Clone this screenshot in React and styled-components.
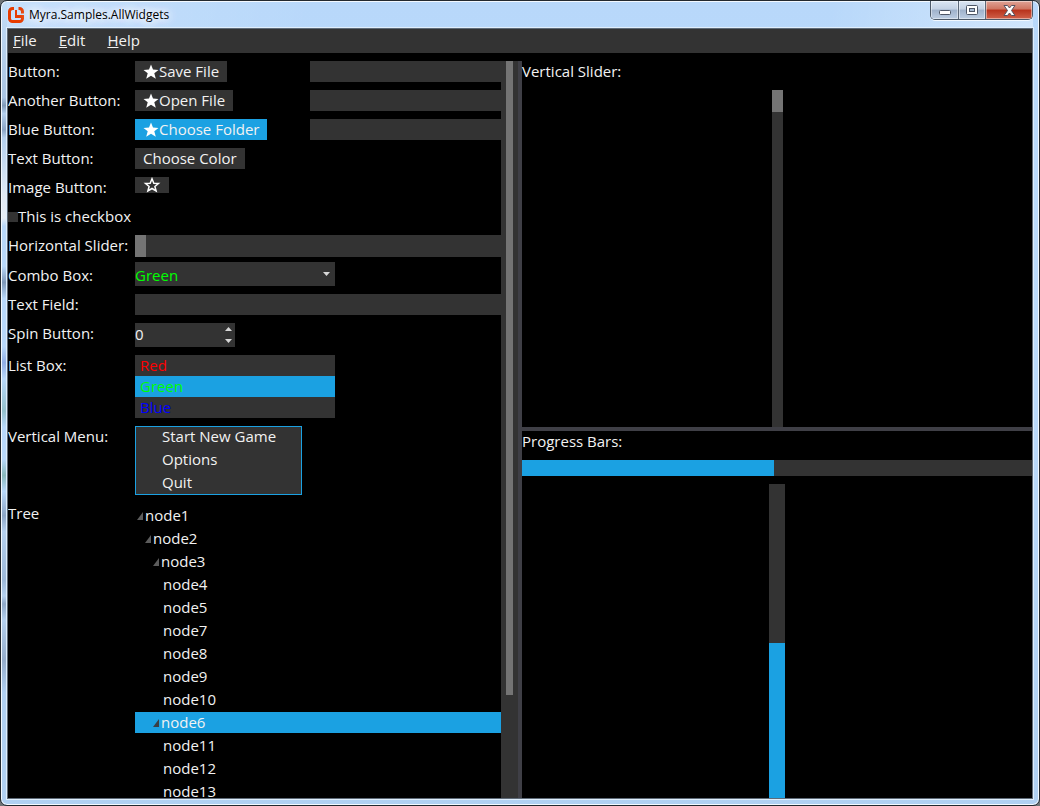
import React, { useState } from "react";
import styled, { createGlobalStyle, css } from "styled-components";

const c = {
  panel: "#333333",
  accent: "#1ba1e2",
  splitter: "#3f3f46",
  thumb: "#747474",
  text: "#f2f2f2",
};

const Global = createGlobalStyle`
  *, *::before, *::after { box-sizing: border-box; }
  body { margin: 0; background: #6f7376; }
  button, input, select { font: inherit; color: inherit; border: 0; border-radius: 0; padding: 0; margin: 0; }
  ul { list-style: none; margin: 0; padding: 0; }
`;

const glassEdge = `linear-gradient(180deg,
  #c4def8 0, #a9c4e2 12%, #7f9ab8 13%, #b4d0ee 14%, #8aa4c4 16%, #b4d0ee 17%,
  #dfeaf5 24%, #e6eef6 27%, #b8d8fa 28%, #b8d8fa 33%, #7e98b8 35%, #b8d8fa 37%,
  #b8d8fa 43%, #90aee6 45%, #b8d8fa 47%, #94c0cc 51%, #b8d8fa 53%,
  #b8d8fa 57%, #88b8bc 59%, #b8d8fa 61%, #8ca6c6 64%, #b4d0ee 66%,
  #9cb8d8 72%, #b4d0ee 74%, #8ea8c8 75%, #b4d0ee 77%, #94acca 82%, #b0d0f2 86%)`;

const Window = styled.div`
  display: flex;
  flex-direction: column;
  height: 100vh;
  overflow: hidden;
  padding: 0 6px 6px 6px;
  border: 1px solid #23292f;
  border-radius: 7px;
  box-shadow: inset 0 0 0 1px #f3f9ff;
  background:
    ${glassEdge} left / 6px 100% no-repeat,
    linear-gradient(180deg, #b8d8fa 0, #bcdbfc 40%, #b0d0f2 100%);
`;

const TitleBar = styled.header`
  display: flex;
  align-items: flex-start;
  flex: none;
  height: 27px;
  background: linear-gradient(100deg, rgba(255, 255, 255, 0.2) 0, transparent 30%, transparent 80%, rgba(255, 255, 255, 0.35) 100%);
`;

const Brand = styled.div`
  display: flex;
  align-items: center;
  gap: 5px;
  flex: 1;
  height: 27px;
  padding-left: 1px;
`;

const Title = styled.h1`
  margin: 0;
  font: 12px/16px "Open Sans", sans-serif;
  color: #000;
  text-shadow: 0 0 8px #fff, 0 0 8px #fff, 0 0 12px #fff, 0 0 16px #fff;
`;

const Controls = styled.div`
  display: flex;
  height: 19px;
  border: 1px solid #4c5968;
  border-top: 0;
  border-radius: 0 0 5px 5px;
  overflow: hidden;
  box-shadow: 0 1px 0 #f3f9ff;
`;

const ControlButton = styled.button`
  display: flex;
  align-items: center;
  justify-content: center;
  width: ${(p) => (p.$close ? 47 : 27)}px;
  border-left: ${(p) => (p.$first ? 0 : 1)}px solid #5c6878;
  box-shadow: inset 0 0 0 1px rgba(255, 255, 255, 0.45);
  background: ${(p) =>
    p.$close
      ? "linear-gradient(180deg, #e0a396 0, #cf7561 45%, #b8321c 50%, #d0614a 100%)"
      : "linear-gradient(180deg, #dbe6f3 0, #c3d1e3 45%, #9fb2cb 50%, #bccde2 100%)"};
`;

const Client = styled.div`
  display: flex;
  flex-direction: column;
  flex: 1;
  min-height: 0;
  border: 1px solid #5f6b78;
  outline: 1px solid #dfeefc;
  background: #000;
  color: ${c.text};
  font: 15px/21px "Open Sans", sans-serif;
`;

const MenuBar = styled.nav`
  display: flex;
  flex: none;
  height: 24px;
  background: ${c.panel};
`;

const MenuBarItem = styled.button`
  padding: 0 5px 2px 5px;
  margin-right: 12px;
  background: none;
  &::first-letter { text-decoration: underline; }
`;

const Panes = styled.main`
  display: grid;
  grid-template-columns: 1fr 4px 1fr;
  flex: 1;
  min-height: 0;
  padding-top: 8px;
`;

const Splitter = styled.div`
  background: ${c.splitter};
`;

const ScrollPane = styled.section`
  display: flex;
  min-width: 0;
  min-height: 0;
`;

const ScrollBody = styled.div`
  display: flex;
  flex-direction: column;
  gap: 8px;
  flex: 1;
  min-width: 0;
  overflow: hidden;
`;

const ScrollTrack = styled.div`
  width: 17px;
  padding: 0 5px;
  background: ${c.panel};
`;

const ScrollThumb = styled.div`
  height: 86%;
  background: ${c.thumb};
`;

const Row = styled.div`
  display: grid;
  grid-template-columns: 119px 167px minmax(0, 1fr);
  grid-auto-rows: ${(p) => (p.$compact ? "21px" : "auto")};
  column-gap: 8px;
  align-items: ${(p) => (p.$compact ? "end" : "start")};
  justify-items: start;
  flex: none;
  min-height: 21px;
`;

const Label = styled.label`
  white-space: nowrap;
`;

const wide = css`
  grid-column: 2 / -1;
  width: 100%;
`;

const Button = styled.button`
  display: flex;
  align-items: center;
  min-height: 16px;
  padding: 0 8px;
  white-space: nowrap;
  background: ${(p) => (p.$blue ? c.accent : c.panel)};
`;

const TextInput = styled.input`
  width: 100%;
  height: 21px;
  background: ${c.panel};
  ${(p) => p.$wide && wide}
`;

const CheckLabel = styled.label`
  display: flex;
  align-items: center;
  height: 21px;
  white-space: nowrap;
`;

const CheckBox = styled.input`
  appearance: none;
  width: 10px;
  height: 10px;
  background: ${c.panel};
  &:checked { background: ${c.accent}; }
`;

const Slider = styled.input`
  appearance: none;
  background: ${c.panel};
  ${(p) =>
    p.$vertical
      ? css`
          writing-mode: vertical-lr;
          width: 11px;
          flex: 1;
          min-height: 0;
          align-self: center;
        `
      : css`
          ${wide}
          height: 22px;
        `}
  &::-webkit-slider-thumb {
    appearance: none;
    width: 11px;
    height: 22px;
    background: ${c.thumb};
  }
`;

const ComboFrame = styled.div`
  display: grid;
  grid-column: 2 / -1;
  align-items: center;
  width: 200px;
  height: 24px;
  background: ${c.panel};
  & > * { grid-area: 1 / 1; }
  & > svg { justify-self: end; margin-right: 5px; pointer-events: none; }
`;

const Combo = styled.select`
  appearance: none;
  width: 100%;
  height: 24px;
  padding-top: 2px;
  background: none;
  color: #00ff00;
`;

const SpinFrame = styled.div`
  display: flex;
  width: 100px;
  height: 24px;
  background: ${c.panel};
`;

const SpinInput = styled.input`
  flex: 1;
  min-width: 0;
  padding-bottom: 2px;
  background: none;
`;

const SpinButtons = styled.div`
  display: flex;
  flex-direction: column;
  width: 13px;
`;

const SpinButton = styled.button`
  display: flex;
  align-items: center;
  justify-content: center;
  flex: 1;
  background: none;
`;

const ListBox = styled.ul`
  width: 200px;
  background: ${c.panel};
`;

const ListItem = styled.li`
  padding-left: 5px;
  color: ${(p) => p.$color};
  background: ${(p) => (p.$selected ? c.accent : "none")};
`;

const VerticalMenu = styled.div`
  display: flex;
  flex-direction: column;
  gap: 2px;
  width: 100%;
  border: 1px solid ${c.accent};
  background: ${c.panel};
`;

const MenuItem = styled.button`
  height: 21px;
  padding: 0 0 2px 26px;
  line-height: 19px;
  text-align: left;
  background: none;
`;

const Tree = styled.ul`
  ${wide}
  display: flex;
  flex-direction: column;
  gap: 2px;
  padding-top: 2px;
`;

const TreeNode = styled.li`
  display: flex;
  align-items: center;
  height: 21px;
  padding-left: ${(p) => p.$level * 8 + (p.$leaf ? 4 : 1)}px;
  background: ${(p) => (p.$selected ? c.accent : "none")};
`;

const RightPane = styled.section`
  display: grid;
  grid-template-rows: minmax(0, 366fr) 4px minmax(0, 367fr);
  min-width: 0;
  min-height: 0;
`;

const Stack = styled.div`
  display: flex;
  flex-direction: column;
  gap: 8px;
  min-height: 0;
`;

const Progress = styled.div`
  display: flex;
  background: ${c.panel};
  ${(p) =>
    p.$vertical
      ? css`
          flex-direction: column;
          justify-content: flex-end;
          align-self: center;
          flex: 1;
          width: 16px;
        `
      : css`
          flex: none;
          height: 16px;
        `}
`;

const ProgressFill = styled.div`
  background: ${c.accent};
`;

const Logo = () => (
  <svg width="16" height="16" viewBox="0 0 16 16" aria-hidden="true">
    <g fill="none" stroke="#e73c00" strokeWidth="3">
      <path d="M6 1.500H4.500A3 3 0 0 0 1.500 4.500V11.500A3 3 0 0 0 4.500 14.500H11.500A3 3 0 0 0 14.500 11.500V9.500H7" />
      <path d="M10.500 1.500H11.500A3 3 0 0 1 14.500 4.500V6.500" />
      <path d="M8 3V9" strokeWidth="2" />
    </g>
  </svg>
);

const Star = ({ outline }) => (
  <svg width={outline ? 18 : 16} height="16" viewBox={outline ? "0 0 18 16" : "0 0 16 16"} aria-hidden="true">
    {outline ? (
      <path d="M9 1.800L10.800 6.200L15.500 6.500L11.900 9.500L13.100 14L9 11.500L4.900 14L6.100 9.500L2.500 6.500L7.200 6.200Z" fill="none" stroke="#fff" strokeWidth="1.500" />
    ) : (
      <path d="M8 .5L10 5.600L15.500 5.900L11.300 9.300L12.800 14.800L8 11.800L3.200 14.800L4.700 9.300L.5 5.900L6 5.600Z" fill="#fff" />
    )}
  </svg>
);

const Arrow = ({ up }) => (
  <svg width="7" height="4" viewBox="0 0 7 4" aria-hidden="true">
    <path d={up ? "M0 4L3.500 0L7 4Z" : "M0 0H7L3.500 4Z"} fill="#d8d8d8" />
  </svg>
);

const TreeMark = ({ dark }) => (
  <svg width="9" height="8" viewBox="0 0 9 8" aria-hidden="true">
    <path d="M1 8L7 0V8Z" fill={dark ? "#3a3f44" : "#5c5c5c"} />
  </svg>
);

const nodes = [
  ["node1", 0, false],
  ["node2", 1, false],
  ["node3", 2, false],
  ["node4", 3, true],
  ["node5", 3, true],
  ["node7", 3, true],
  ["node8", 3, true],
  ["node9", 3, true],
  ["node10", 3, true],
  ["node6", 2, false],
  ["node11", 3, true],
  ["node12", 3, true],
  ["node13", 3, true],
];

const colors = [
  ["Red", "#ff0000"],
  ["Green", "#00ff00"],
  ["Blue", "#0000ff"],
];

export default function App() {
  const [picked, setPicked] = useState("Green");
  const [node, setNode] = useState("node6");
  const [spin, setSpin] = useState(0);
  const progress = 49.4;

  return (
    <>
      <Global />
      <Window>
        <TitleBar>
          <Brand>
            <Logo />
            <Title>Myra.Samples.AllWidgets</Title>
          </Brand>
          <Controls>
            <ControlButton $first aria-label="Minimize">
              <svg width="12" height="14" viewBox="0 0 12 14"><rect x=".5" y="7.500" width="11" height="4" rx="1" fill="#fff" stroke="#4d5666" /></svg>
            </ControlButton>
            <ControlButton aria-label="Maximize">
              <svg width="12" height="10" viewBox="0 0 12 10">
                <rect x=".5" y=".5" width="11" height="9" rx="1" fill="#fff" stroke="#4d5666" />
                <rect x="3.500" y="3.500" width="5" height="3" fill="#a9bcd4" stroke="#4d5666" />
              </svg>
            </ControlButton>
            <ControlButton $close aria-label="Close">
              <svg width="13" height="11" viewBox="0 0 13 11">
                <path d="M1 .5H4.500L6.500 3L8.500 .5H12L8.500 5.500L12 10.500H8.500L6.500 8L4.500 10.500H1L4.500 5.500Z" fill="#fff" stroke="#56525f" strokeLinejoin="round" />
              </svg>
            </ControlButton>
          </Controls>
        </TitleBar>
        <Client>
          <MenuBar>
            <MenuBarItem>File</MenuBarItem>
            <MenuBarItem>Edit</MenuBarItem>
            <MenuBarItem>Help</MenuBarItem>
          </MenuBar>
          <Panes>
            <ScrollPane>
              <ScrollBody>
                <Row>
                  <Label htmlFor="save">Button:</Label>
                  <Button id="save"><Star />Save File</Button>
                  <TextInput aria-label="Save path" />
                </Row>
                <Row>
                  <Label htmlFor="open">Another Button:</Label>
                  <Button id="open"><Star />Open File</Button>
                  <TextInput aria-label="Open path" />
                </Row>
                <Row>
                  <Label htmlFor="folder">Blue Button:</Label>
                  <Button id="folder" $blue><Star />Choose Folder</Button>
                  <TextInput aria-label="Folder path" />
                </Row>
                <Row>
                  <Label htmlFor="color">Text Button:</Label>
                  <Button id="color">Choose Color</Button>
                </Row>
                <Row>
                  <Label htmlFor="image">Image Button:</Label>
                  <Button id="image" aria-label="Favourite"><Star outline /></Button>
                </Row>
                <Row>
                  <CheckLabel><CheckBox type="checkbox" />This is checkbox</CheckLabel>
                </Row>
                <Row>
                  <Label htmlFor="hslider">Horizontal Slider:</Label>
                  <Slider id="hslider" type="range" defaultValue="0" />
                </Row>
                <Row $compact>
                  <Label htmlFor="combo">Combo Box:</Label>
                  <ComboFrame>
                    <Combo id="combo" defaultValue="Green">
                      {colors.map(([name]) => <option key={name}>{name}</option>)}
                    </Combo>
                    <Arrow />
                  </ComboFrame>
                </Row>
                <Row>
                  <Label htmlFor="text">Text Field:</Label>
                  <TextInput id="text" $wide />
                </Row>
                <Row>
                  <Label htmlFor="spin">Spin Button:</Label>
                  <SpinFrame>
                    <SpinInput id="spin" value={spin} onChange={(e) => setSpin(Number(e.target.value) || 0)} />
                    <SpinButtons>
                      <SpinButton aria-label="Increase" onClick={() => setSpin(spin + 1)}><Arrow up /></SpinButton>
                      <SpinButton aria-label="Decrease" onClick={() => setSpin(spin - 1)}><Arrow /></SpinButton>
                    </SpinButtons>
                  </SpinFrame>
                </Row>
                <Row>
                  <Label as="span" id="list-label">List Box:</Label>
                  <ListBox role="listbox" aria-labelledby="list-label">
                    {colors.map(([name, color]) => (
                      <ListItem key={name} role="option" aria-selected={picked === name} $selected={picked === name} $color={color} onClick={() => setPicked(name)}>
                        {name}
                      </ListItem>
                    ))}
                  </ListBox>
                </Row>
                <Row>
                  <Label as="span" id="menu-label">Vertical Menu:</Label>
                  <VerticalMenu role="menu" aria-labelledby="menu-label">
                    <MenuItem role="menuitem">Start New Game</MenuItem>
                    <MenuItem role="menuitem">Options</MenuItem>
                    <MenuItem role="menuitem">Quit</MenuItem>
                  </VerticalMenu>
                </Row>
                <Row>
                  <Label as="span" id="tree-label">Tree</Label>
                  <Tree role="tree" aria-labelledby="tree-label">
                    {nodes.map(([name, level, leaf]) => (
                      <TreeNode key={name} role="treeitem" aria-level={level + 1} aria-selected={node === name} $level={level} $leaf={leaf} $selected={node === name} onClick={() => setNode(name)}>
                        {!leaf && <TreeMark dark={node === name} />}
                        {name}
                      </TreeNode>
                    ))}
                  </Tree>
                </Row>
              </ScrollBody>
              <ScrollTrack><ScrollThumb /></ScrollTrack>
            </ScrollPane>
            <Splitter />
            <RightPane>
              <Stack>
                <Label htmlFor="vslider">Vertical Slider:</Label>
                <Slider id="vslider" type="range" defaultValue="0" $vertical />
              </Stack>
              <Splitter />
              <Stack>
                <Label as="span" id="progress-label">Progress Bars:</Label>
                <Progress role="progressbar" aria-labelledby="progress-label" aria-valuenow={progress}>
                  <ProgressFill style={{ width: `${progress}%` }} />
                </Progress>
                <Progress $vertical role="progressbar" aria-labelledby="progress-label" aria-valuenow={progress}>
                  <ProgressFill style={{ height: `${progress}%` }} />
                </Progress>
              </Stack>
            </RightPane>
          </Panes>
        </Client>
      </Window>
    </>
  );
}
